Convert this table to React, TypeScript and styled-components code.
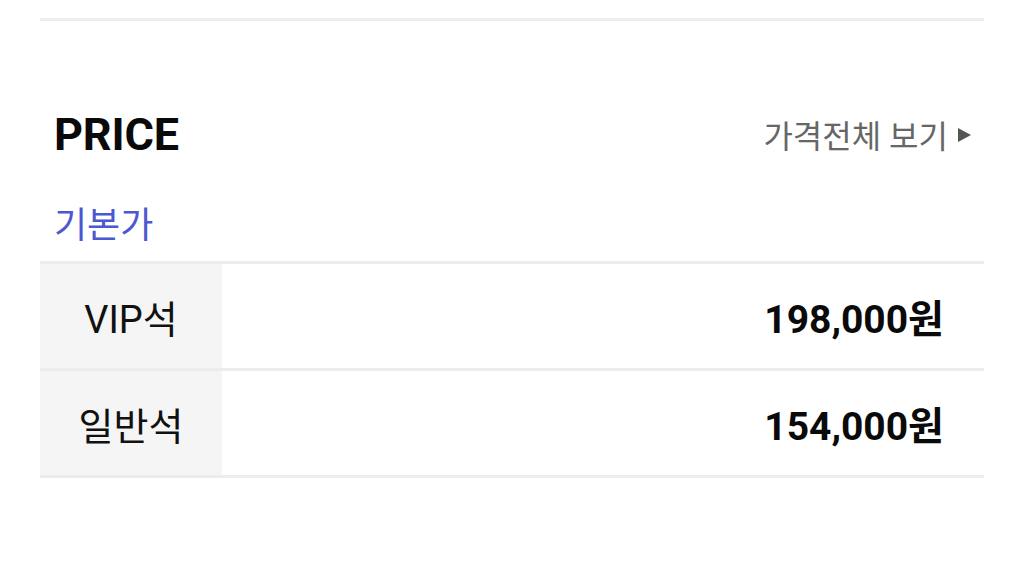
import React from 'react'
import styled, { createGlobalStyle } from 'styled-components'

const GlobalStyle = createGlobalStyle`
  html, body {
    margin: 0;
    padding: 0;
    background: #ffffff;
  }
  body {
    font-family: Roboto, 'Noto Sans CJK KR', sans-serif;
    color: #111111;
  }
`

type PriceItem = {
  seat: string
  price: string
}

const prices: PriceItem[] = [
  { seat: 'VIP석', price: '198,000원' },
  { seat: '일반석', price: '154,000원' },
]

const App: React.FC = () => {
  return (
    <>
      <GlobalStyle />
      <Page>
        <Divider />
        <Header>
          <Title>PRICE</Title>
          <MoreLink>
            가격전체 보기
            <Arrow />
          </MoreLink>
        </Header>
        <Category>기본가</Category>
        <PriceTable>
          {prices.map((item) => (
            <Row key={item.seat}>
              <SeatCell>{item.seat}</SeatCell>
              <PriceCell>{item.price}</PriceCell>
            </Row>
          ))}
        </PriceTable>
      </Page>
    </>
  )
}

const Page = styled.div`
  padding: 18px 40px 0;
  display: flex;
  flex-direction: column;
`

const Divider = styled.div`
  height: 3px;
  background: #ececec;
`

const Header = styled.div`
  margin-top: 86px;
  height: 54px;
  display: flex;
  align-items: center;
  justify-content: space-between;
`

const Title = styled.h2`
  margin: 0 0 0 14px;
  font-family: Roboto, sans-serif;
  font-size: 45px;
  font-weight: 700;
  color: #0a0a0a;
  letter-spacing: -0.2px;
`

const MoreLink = styled.a`
  display: flex;
  align-items: center;
  gap: 10px;
  margin-right: 13px;
  font-family: Roboto, 'Noto Sans CJK KR', sans-serif;
  font-size: 32px;
  color: #666666;
  text-decoration: none;
  cursor: pointer;
`

const Arrow = styled.span`
  width: 0;
  height: 0;
  margin-top: 2px;
  border-top: 7px solid transparent;
  border-bottom: 7px solid transparent;
  border-left: 13px solid #555555;
`

const Category = styled.div`
  margin: 37px 0 15px 14px;
  line-height: 48px;
  font-family: 'Noto Sans CJK KR', sans-serif;
  font-size: 36px;
  color: #4a59cf;
`

const PriceTable = styled.div`
  border-top: 3px solid #ececec;
`

const Row = styled.div`
  display: grid;
  grid-template-columns: 182px 1fr;
  height: 104px;
  border-bottom: 3px solid #ececec;
`

const SeatCell = styled.div`
  display: flex;
  align-items: center;
  justify-content: center;
  background: #f5f5f5;
  font-family: Roboto, 'Noto Sans CJK KR', sans-serif;
  font-size: 38px;
  color: #111111;
`

const PriceCell = styled.div`
  display: flex;
  align-items: center;
  justify-content: flex-end;
  padding-right: 40px;
  font-family: Roboto, 'Noto Sans CJK KR', sans-serif;
  font-size: 39px;
  font-weight: 700;
  color: #0a0a0a;
`

export default App
